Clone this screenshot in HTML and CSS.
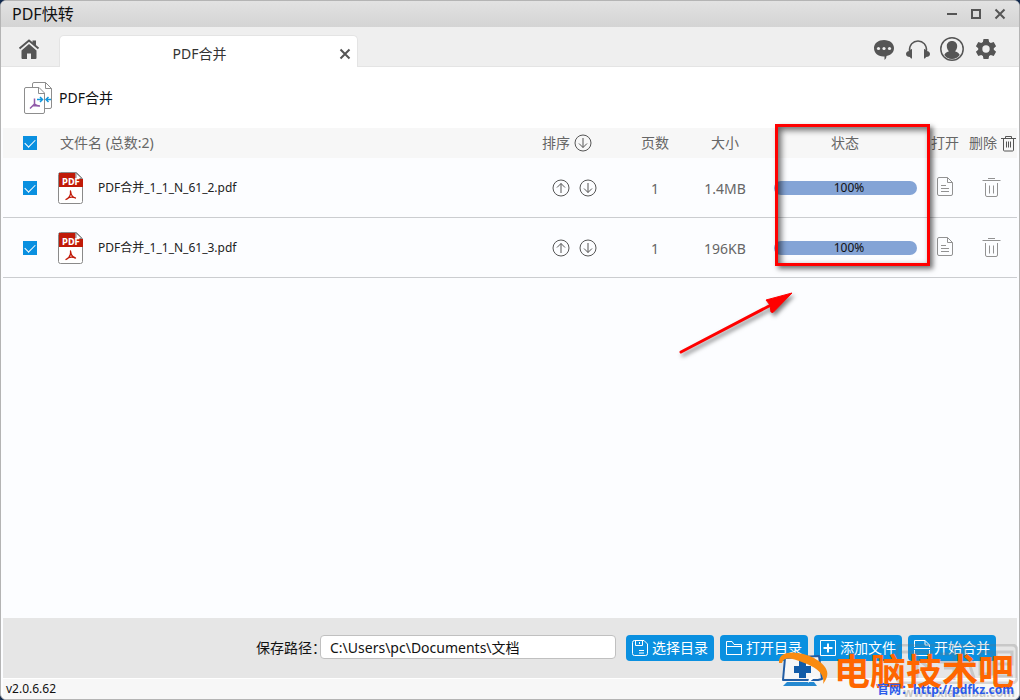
FILE: index.html
```html
<!DOCTYPE html>
<html lang="zh-CN">
<head>
<meta charset="utf-8">
<title>PDF快转</title>
<link rel="stylesheet" href="styles.css">
</head>
<body>
<svg class="defs" aria-hidden="true">
  <defs>
    <symbol id="down" viewBox="0 0 18 18"><circle cx="9" cy="9" r="8"/><path d="M9 4v9.500M5 9.500l4 4 4-4"/></symbol>
    <symbol id="up" viewBox="0 0 18 18"><circle cx="9" cy="9" r="8"/><path d="M9 14V4.500M5 8.500l4-4 4 4"/></symbol>
    <symbol id="pdf" viewBox="0 0 28 34">
      <path d="M3.500 1.500h16l6 6v23a2 2 0 0 1-2 2h-20a2 2 0 0 1-2-2v-27a2 2 0 0 1 2-2z" fill="#fff" stroke="#8a8a8a"/>
      <path d="M2 2h16.500v6H26v8H2z" fill="#c01a08"/>
      <path d="M19 2v5.500h6z" fill="#fff" stroke="#8a8a8a"/>
      <path d="M13.500 20c.5 4-.5 6.500-4.500 8.500 2.500-2.500 6-3 9.500-1.500-3-.5-4.500-3-5-7z" fill="none" stroke="#c01a08" stroke-width="1.300" stroke-linejoin="round"/>
    </symbol>
    <symbol id="doc" viewBox="0 0 18 21"><path d="M3 1.500h8.500l5 5V18a1.500 1.500 0 0 1-1.500 1.500H3A1.500 1.500 0 0 1 1.500 18V3A1.500 1.500 0 0 1 3 1.500zM11.500 1.500v5h5M5 9.500h5M5 12.500h8M5 15.500h8"/></symbol>
    <symbol id="trash" viewBox="0 0 19 21"><path d="M.5 3.500h18M6 1.500h7M3.500 6v12a1.500 1.500 0 0 0 1.500 1.500h9a1.500 1.500 0 0 0 1.500-1.500V6M7.500 8.500v8M11.500 8.500v8"/></symbol>
  </defs>
</svg>
<div class="window">
  <header class="titlebar">
    <h1 class="app-name">PDF快转</h1>
    <div class="window-controls">
      <button class="icon-btn" aria-label="最小化"><svg width="12" height="12"><path d="M1 6h10" stroke-width="2"/></svg></button>
      <button class="icon-btn" aria-label="最大化"><svg width="12" height="12"><path d="M2 2h8v8H2z" stroke-width="2"/></svg></button>
      <button class="icon-btn" aria-label="关闭"><svg width="12" height="12"><path d="M1.500 1.500l9 9M10.500 1.500l-9 9" stroke-width="2"/></svg></button>
    </div>
  </header>
  <nav class="tabbar">
    <button class="icon-btn home" aria-label="主页"><svg width="22" height="22" viewBox="0 0 22 22"><path class="solid" d="M11 6l7.500 6.500V20a1 1 0 0 1-1 1H13v-5.500h-4V21H4.500a1 1 0 0 1-1-1v-7.500z"/><path d="M1.500 10.500L11 2.500l9.500 8" stroke-width="2"/><path class="solid" d="M14.500 2.500H18V8l-3.500-3z"/></svg></button>
    <div class="tab"><span class="tab-title">PDF合并</span><button class="icon-btn" aria-label="关闭标签"><svg width="12" height="12"><path d="M1.500 1.500l9 9M10.500 1.500l-9 9" stroke-width="2"/></svg></button></div>
    <div class="tools">
      <button class="icon-btn" aria-label="消息"><svg width="24" height="24" viewBox="0 0 24 24"><path class="solid" d="M12 3c5.800 0 10 3.600 10 8s-3 7-7.500 8c0 2-1 3-2 4v-3.500C6 20 2 16 2 11s4.500-8 10-8z"/><g class="hole"><circle cx="6.500" cy="11.500" r="1.600"/><circle cx="12" cy="11.500" r="1.600"/><circle cx="17.500" cy="11.500" r="1.600"/></g></svg></button>
      <button class="icon-btn" aria-label="客服"><svg width="24" height="24" viewBox="0 0 24 24"><path d="M3.500 14C3 8 7 4 12 4s9 4 8.500 10" stroke-width="1.400"/><path class="solid" d="M4.500 12.500l1.500-.5v9.500c-1 0-1.500-.5-2-1.500C1.500 20 0 19 0 17c0-1.500 1-3 3.500-3zM19.500 12.500L18 12v9.500c1 0 1.500-.5 2-1.500 2.500 0 4-1 4-3 0-1.500-1-3-3.500-3z"/></svg></button>
      <button class="icon-btn" aria-label="用户"><svg width="24" height="24" viewBox="0 0 24 24"><circle cx="12" cy="12" r="11.200" stroke-width="1.500"/><path class="solid" d="M12 4c3.200 0 5.200 2.200 5.200 5 0 2-.8 4-2.200 5.200 2.500.8 4 2 4.700 3.800A10 10 0 0 1 12 22a10 10 0 0 1-7.700-4c.7-1.800 2.200-3 4.700-3.800C7.600 13 6.800 11 6.800 9c0-2.800 2-5 5.200-5z"/></svg></button>
      <button class="icon-btn" aria-label="设置"><svg width="24" height="24" viewBox="0 0 24 24"><path class="solid" d="M9.500 2h5l.6 3 1.700 1 2.900-1 2.400 4.200-2.300 2v1.600l2.300 2-2.400 4.200-2.900-1-1.700 1-.6 3h-5l-.6-3-1.700-1-2.900 1-2.400-4.200 2.300-2v-1.600l-2.300-2L4.300 5l2.900 1 1.700-1z"/><circle class="hole" cx="12" cy="12" r="3.700"/></svg></button>
    </div>
  </nav>
  <main class="content">
    <div class="heading">
      <svg width="30" height="34" viewBox="0 0 30 34"><path d="M9.500 6V3a1.500 1.500 0 0 1 1.500-1.500h11.500l6 6V26a1.500 1.500 0 0 1-1.500 1.500h-6M22.500 1.500v6h6M16 6.500H3A1.500 1.500 0 0 0 1.500 8v23A1.500 1.500 0 0 0 3 32.500h17a1.500 1.500 0 0 0 1.500-1.500V12zM15.500 6.500v6h6" fill="none" stroke="#8d8d8d"/><path d="M11.500 17.500v5.500l-4.500 4.500M11.500 23c1.500 1.500 3 2 5.500 2M10 24.500l6 .5" fill="none" stroke="#9059a8" stroke-width="1.500"/><path d="M14 18.500h5M17 16l2.500 2.500L17 21M28 18.500h-5M25.500 16L23 18.500l2.500 2.500" fill="none" stroke="#1296db" stroke-width="1.500"/></svg>
      <h2 class="heading-title">PDF合并</h2>
    </div>
    <table class="files">
      <colgroup><col class="c-check"><col><col class="c-sort"><col class="c-num"><col class="c-num"><col class="c-status"><col class="c-open"><col class="c-delete"></colgroup>
      <thead>
        <tr>
          <th><input type="checkbox" checked aria-label="全选"></th>
          <th class="name-head">文件名 (总数:2)</th>
          <th><div class="sort-head">排序<button class="icon-btn line" aria-label="排序"><svg width="18" height="18"><use href="#down"/></svg></button></div></th>
          <th>页数</th><th>大小</th><th>状态</th><th>打开</th>
          <th><div class="delete-head">删除<button class="icon-btn line" aria-label="全部删除"><svg width="15" height="17" viewBox="0 0 15 17"><path d="M0 3.500h15M4.500 3V1.500h6V3M2.500 4v11a1 1 0 0 0 1 1h8a1 1 0 0 0 1-1V4M5.500 6.500v6M7.500 6.500v6M9.500 6.500v6"/></svg></button></div></th>
        </tr>
      </thead>
      <tbody>
        <tr>
          <td><input type="checkbox" checked aria-label="PDF合并_1_1_N_61_2.pdf"></td>
          <td><div class="file"><svg width="28" height="34"><use href="#pdf"/><text class="pdf-label" x="14" y="14">PDF</text></svg>PDF合并_1_1_N_61_2.pdf</div></td>
          <td><div class="sort"><button class="icon-btn line" aria-label="上移"><svg width="18" height="18"><use href="#up"/></svg></button><button class="icon-btn line" aria-label="下移"><svg width="18" height="18"><use href="#down"/></svg></button></div></td>
          <td class="num">1</td><td class="num">1.4MB</td><td><div class="progress">100%</div></td>
          <td class="row-icon"><button class="icon-btn pale" aria-label="打开"><svg width="18" height="21"><use href="#doc"/></svg></button></td>
          <td><div class="remove"><button class="icon-btn pale" aria-label="删除"><svg width="19" height="21"><use href="#trash"/></svg></button></div></td>
        </tr>
        <tr>
          <td><input type="checkbox" checked aria-label="PDF合并_1_1_N_61_3.pdf"></td>
          <td><div class="file"><svg width="28" height="34"><use href="#pdf"/><text class="pdf-label" x="14" y="14">PDF</text></svg>PDF合并_1_1_N_61_3.pdf</div></td>
          <td><div class="sort"><button class="icon-btn line" aria-label="上移"><svg width="18" height="18"><use href="#up"/></svg></button><button class="icon-btn line" aria-label="下移"><svg width="18" height="18"><use href="#down"/></svg></button></div></td>
          <td class="num">1</td><td class="num">196KB</td><td><div class="progress">100%</div></td>
          <td class="row-icon"><button class="icon-btn pale" aria-label="打开"><svg width="18" height="21"><use href="#doc"/></svg></button></td>
          <td><div class="remove"><button class="icon-btn pale" aria-label="删除"><svg width="19" height="21"><use href="#trash"/></svg></button></div></td>
        </tr>
      </tbody>
    </table>
  </main>
  <section class="actions">
    <label for="path">保存路径：</label>
    <input id="path" class="path" type="text" value="C:\Users\pc\Documents\文档">
    <button class="action"><svg width="16" height="16"><path d="M.5 2.500a2 2 0 0 1 2-2H12l3.500 3.500v9.500a2 2 0 0 1-2 2h-11a2 2 0 0 1-2-2zM3.500.5v5h7v-5M7.500 2v2M7 10.500h5M7 13h5"/></svg>选择目录</button>
    <button class="action"><svg width="16" height="16"><path d="M.5 1.500H6l2 3h7.500v10H.5zM.5 6.500h15"/></svg>打开目录</button>
    <button class="action"><svg width="16" height="16"><path d="M.5.5h15v15H.5z"/><path d="M8 3.500v9M3.500 8h9" stroke-width="2"/></svg>添加文件</button>
    <button class="action"><svg width="16" height="16"><path d="M.5 7V.5H11L15.500 5v2M11 .5V5h4.500M.5 10v5.500h15V10M0 8.500h16"/></svg>开始合并</button>
  </section>
  <footer class="statusbar">v2.0.6.62</footer>

  <div class="callout-box"></div>
  <svg class="callout-arrow" width="124" height="76" viewBox="0 0 124 76"><path d="M6 65L96 18" stroke="#f00" stroke-width="3" stroke-linecap="round"/><path d="M117 6L91 13l4 5 1 7 2 .5z" fill="#f00" stroke="#f00"/></svg>
  <div class="watermark">
    <svg class="ghost" width="122" height="40" viewBox="0 0 122 40"><rect x="1" y="1" width="120" height="38" rx="5"/><path d="M5 8h32M21 8v26M23 16l9 7M44 10h28M58 4v14M42 18h36M48 24h22M58 20v16M68 4l10 30M84 8h12v22H84zM100 8h16v12h-16zM100 20v12h17"/></svg>
    <span class="ghost-url">www.xiazaiba.com</span>
    <svg class="wm-logo" width="52" height="36" viewBox="0 0 52 36"><path d="M7 6l34-2 3 23-4 1H5z" fill="#f7f7f7" stroke="#205ca4" stroke-width="2" stroke-linejoin="round"/><path d="M16 14h5V9h7v5h5v7h-5v5h-7v-5h-5z" fill="#125ca8"/><path d="M9 30h27l3 4H5z" fill="#2488d0"/><path d="M30 31l1-5 8-2z" fill="#fff"/><path d="M1 11C0-3 22-1 36 6c14 8 17 16 9 26 2-8-4-15-16-20C17 7 6 3 4 11z" fill="#f98b10"/></svg>
    <strong class="wm-name">电脑技术吧</strong>
    <span class="wm-url">官网：http://pdfkz.com</span>
  </div>
</div>
</body>
</html>
```
FILE: styles.css
```css
* { box-sizing: border-box; }
body { margin: 0; background: #132a4e; color: #111; font: 14px/20px "Noto Sans", "Noto Sans CJK SC", sans-serif; }
h1, h2 { margin: 0; font-weight: 400; }
svg { display: block; }
.defs { position: absolute; width: 0; height: 0; }
.window { position: relative; display: flex; flex-direction: column; min-height: 100vh; overflow: hidden; border: 1px solid #b4b4b4; border-radius: 6px; background: #fcfdff; }
.icon-btn { display: inline-block; padding: 0; border: 0; background: none; fill: none; stroke: #555; vertical-align: middle; }
.solid { fill: #555; stroke: none; }
.hole { fill: #efefef; stroke: none; }
.titlebar { display: flex; align-items: center; justify-content: space-between; height: 26px; padding: 0 13px 0 11px; background: linear-gradient(#e2e2e2, #d4d4d4); }
.app-name { font-size: 16px; line-height: 24px; }
.window-controls { display: flex; gap: 12px; }
.tabbar { display: flex; align-items: flex-end; height: 40px; background: #efefef; border-bottom: 1px solid #e4e4e4; }
.home { margin: 0 19px 6px 17px; }
.tab { display: flex; align-items: center; flex: 0 1 299px; height: 32px; padding: 4px 6px 0 0; margin-bottom: -1px; border: 1px solid #e4e4e4; border-bottom: 0; border-radius: 5px 5px 0 0; background: #fff; color: #333; }
.tab-title { flex: 1; text-align: center; }
.tools { display: flex; gap: 10px; margin: 0 21px 5px auto; }
.content { flex: 1; }
.heading { display: flex; align-items: center; gap: 6px; height: 61px; padding-left: 22px; background: #fff; }
.heading-title { font-size: 14px; }
.files { width: calc(100% - 4px); margin: 0 2px; border-spacing: 0; table-layout: fixed; color: #666; }
.files th, .files td { padding: 0; font-weight: 400; text-align: center; }
.files th { height: 30px; background: #f7f7f7; }
.files td { height: 60px; border-bottom: 1px solid #cbcdd0; }
.files .num { padding-top: 2px; }
.files .row-icon { padding-bottom: 3px; }
.c-check { width: 54px; }
.c-sort { width: 80px; }
.c-num { width: 70px; }
.c-status { width: 170px; }
.c-open { width: 30px; }
.c-delete { width: 57px; }
.files .name-head { padding-left: 3px; text-align: left; }
input[type="checkbox"] { display: block; appearance: none; width: 14px; height: 14px; margin: 0 auto; background: #0a90e0; }
input[type="checkbox"]:checked::after { content: ""; display: block; width: 9px; height: 5px; margin: 3px 2px; border: solid #fff; border-width: 0 0 1px 1px; transform: rotate(-45deg); }
.sort-head, .delete-head { display: flex; align-items: center; gap: 4px; padding-left: 2px; }
.delete-head { padding-left: 9px; }
.line { stroke: #555; }
.pale { stroke: #929292; }
.file { display: flex; align-items: center; gap: 13px; font-size: 12px; color: #222; }
.pdf-label { fill: #fff; font: 700 8px "DejaVu Sans", sans-serif; text-anchor: middle; }
.sort { display: flex; gap: 9px; padding-left: 12px; }
.progress { width: 143px; height: 14px; margin: 0 13px 0 14px; padding-left: 7px; border-radius: 7px; background: #84a4d6; color: #111; font-size: 12px; line-height: 14px; }
.remove { padding-left: 5px; }
.actions { display: flex; align-items: center; justify-content: flex-end; height: 60px; padding: 0 21px 0 20px; margin: 0 2px; gap: 6px; background: #e6e6e6; }
.path { flex: 0 1 296px; min-width: 80px; height: 24px; margin: -2px 4px 0 -12px; padding: 0 9px; border: 1px solid #c0c0c0; border-radius: 4px; background: #fff; color: #111; font: inherit; }
.action { display: flex; align-items: center; gap: 4px; flex: none; width: 88px; height: 26px; padding: 0 6px; border: 0; border-radius: 4px; background: #0a90e0; color: #fff; font: inherit; white-space: nowrap; fill: none; stroke: #fff; }
.statusbar { height: 21px; margin: 0 2px; padding-left: 3px; border-top: 1px solid #fff; background: #f7f7f7; font-size: 12px; line-height: 20px; }
.callout-box { position: absolute; top: 123px; left: 774px; width: 155px; height: 142px; border: 3px solid #f00; box-shadow: 3px 3px 5px rgba(0,0,0,.55), inset 3px 3px 6px rgba(0,0,0,.6); }
.callout-arrow { position: absolute; top: 286px; left: 674px; overflow: visible; filter: drop-shadow(2px 3px 2px rgba(0,0,0,.5)); }
.watermark { position: absolute; right: 0; bottom: 0; width: 242px; height: 56px; pointer-events: none; }
.ghost { position: absolute; right: 1px; top: 1px; fill: none; stroke: rgba(110,110,110,.25); stroke-width: 3; }
.ghost-url { position: absolute; right: 4px; bottom: 0; color: rgba(110,110,110,.35); font-size: 12px; font-weight: 700; line-height: 12px; }
.wm-logo { position: absolute; left: 1px; top: 9px; }
.wm-name { position: absolute; right: 5px; top: 4px; color: #f60; font: 700 36px/44px "Noto Sans CJK SC", sans-serif; white-space: nowrap; }
.wm-url { position: absolute; right: 5px; bottom: 1px; color: #2b5bea; font: 700 12px/16px "Noto Sans", "Noto Sans CJK SC", sans-serif; white-space: nowrap; }
```
